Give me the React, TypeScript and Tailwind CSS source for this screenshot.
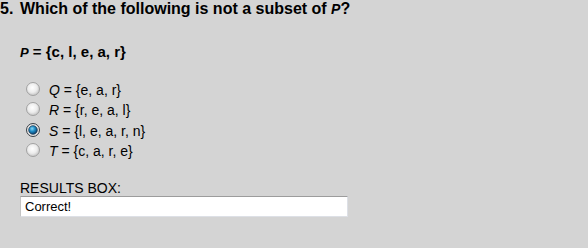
import React from "react";

type Option = { letter: string; set: string; checked?: boolean };

const options: Option[] = [
  { letter: "Q", set: "{e, a, r}" },
  { letter: "R", set: "{r, e, a, l}" },
  { letter: "S", set: "{l, e, a, r, n}", checked: true },
  { letter: "T", set: "{c, a, r, e}" },
];

function Radio({ checked }: { checked?: boolean }) {
  return (
    <svg width="14" height="14" viewBox="0 0 14 14" className="shrink-0">
      <defs>
        <radialGradient id="rg" cx="0.45" cy="0.4" r="0.65">
          <stop offset="0" stopColor="#ffffff" />
          <stop offset="0.55" stopColor="#ececec" />
          <stop offset="1" stopColor="#bdbdbd" />
        </radialGradient>
        <radialGradient id="dot" cx="0.4" cy="0.35" r="0.7">
          <stop offset="0" stopColor="#8ad8f7" />
          <stop offset="0.45" stopColor="#1e8cc6" />
          <stop offset="1" stopColor="#0a3560" />
        </radialGradient>
      </defs>
      {checked ? (
        <>
          <circle cx="7" cy="7" r="6.5" fill="#e4e4e4" stroke="#3a3f46" strokeWidth="1" />
          <circle cx="7" cy="7" r="4.3" fill="url(#dot)" stroke="#16324e" strokeWidth="0.7" />
        </>
      ) : (
        <circle cx="7" cy="7" r="6.5" fill="url(#rg)" stroke="#a2a2a2" strokeWidth="1" />
      )}
    </svg>
  );
}

export default function App() {
  return (
    <div className="w-[588px] h-[248px] bg-[#d4d4d4] text-black font-['Liberation_Sans',Arial,sans-serif] overflow-hidden">
      <h2 className="flex text-[16px] leading-[18px] font-bold">
        <span className="w-[20px]">5.</span>
        <span>
          Which of the following is not a subset of <i className="text-[14px]">P</i>?
        </span>
      </h2>

      <div className="pl-5">
        <p className="mt-[25px] text-[15px] leading-[18px] font-bold">
          <i className="text-[13px]">P</i> = {"{c, l, e, a, r}"}
        </p>

        <ul className="mt-[17px] pl-[6px] text-[14px]">
          {options.map((o) => (
            <li key={o.letter} className="flex items-center gap-[9px] h-[20.3px]">
              <Radio checked={o.checked} />
              <span className="leading-[20px] mt-[2px]">
                <i>{o.letter}</i> = {o.set}
              </span>
            </li>
          ))}
        </ul>

        <div className="mt-[20px] text-[14px] leading-[16px]">RESULTS BOX:</div>
        <div className="w-[328px] h-[21px] bg-white border border-t-[#9c9c9c] border-l-[#c4c4c4] border-r-[#dde0e6] border-b-[#dde0e6] pl-1 text-[13px] leading-[19px]">
          Correct!
        </div>
      </div>
    </div>
  );
}
